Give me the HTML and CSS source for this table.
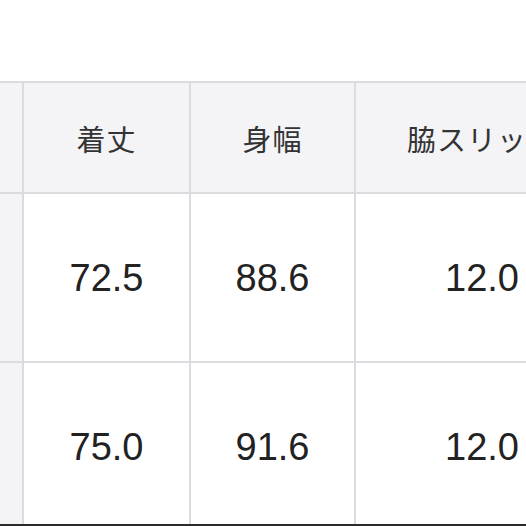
FILE: index.html
```html
<!DOCTYPE html>
<html lang="ja">
<head>
<meta charset="utf-8">
<link rel="stylesheet" href="styles.css">
</head>
<body>
<div class="page">
  <div class="size-table">
    <div class="cell side"></div>
    <div class="cell head">着丈</div>
    <div class="cell head">身幅</div>
    <div class="cell head">脇スリット</div>

    <div class="cell side"></div>
    <div class="cell num">72.5</div>
    <div class="cell num">88.6</div>
    <div class="cell num">12.0</div>

    <div class="cell side"></div>
    <div class="cell num">75.0</div>
    <div class="cell num">91.6</div>
    <div class="cell num">12.0</div>
  </div>
</div>
</body>
</html>
```

FILE: styles.css
```css
html, body {
  margin: 0;
  padding: 0;
  background: #ffffff;
}

.page {
  box-sizing: border-box;
  width: 526px;
  height: 526px;
  overflow: hidden;
  padding-top: 81px;
  border-bottom: 2px solid #2b2b2b;
}

.size-table {
  display: grid;
  grid-template-columns: 22px 165px 163px 252px;
  grid-template-rows: 109px 167px 167px;
  gap: 2px;
  background: #dcdce0;
  border-top: 2px solid #dcdce0;
  width: max-content;
}

.cell {
  display: flex;
  align-items: center;
  justify-content: center;
  background: #ffffff;
  white-space: nowrap;
}

.side {
  background: #f4f4f6;
}

.head {
  background: #f4f4f6;
  color: #333333;
  font-family: "Noto Sans CJK JP", "Noto Sans", sans-serif;
  font-size: 29px;
  font-weight: 400;
  letter-spacing: 1px;
}

.num {
  color: #222222;
  font-family: "Liberation Sans", Arial, sans-serif;
  font-size: 38px;
  padding-top: 2px;
}
```
